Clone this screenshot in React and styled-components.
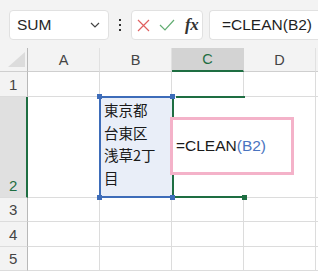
import styled, {createGlobalStyle} from 'styled-components'

const GlobalStyle = createGlobalStyle`
	html, body {
		margin: 0;
		padding: 0;
		background: #ffffff;
		overflow: hidden;
	}
	body {
		font-family: "Liberation Sans", "Noto Sans CJK JP", sans-serif;
	}
`

const Page = styled.div`
	width: 318px;
	height: 271px;
	overflow: hidden;
	display: flex;
	flex-direction: column;
`

const Toolbar = styled.div`
	height: 48px;
	flex: none;
	background: #f3f3f3;
	display: flex;
	align-items: flex-start;
	padding: 10px 0 0 9px;
	box-sizing: border-box;
`

const Box = styled.div`
	height: 30px;
	box-sizing: border-box;
	background: #ffffff;
	border: 1px solid #e1e1e1;
	border-radius: 4px;
	display: flex;
	align-items: center;
	flex: none;
`

const NameBox = styled(Box)`
	width: 100px;
	padding: 0 0 0 7px;
	justify-content: space-between;
	font-size: 15.5px;
	color: #262626;
`

const Chevron = styled.svg`
	width: 10px;
	height: 6px;
	margin-right: 8px;
`

const Dots = styled.div`
	width: 22px;
	height: 30px;
	display: flex;
	flex-direction: column;
	align-items: center;
	justify-content: center;
	gap: 3px;

	span {
		width: 2px;
		height: 2px;
		background: #333;
	}
`

const FxBox = styled(Box)`
	width: 72px;
	padding: 0 0 0 5px;
	gap: 9px;
`

const Fx = styled.span`
	font-family: "Liberation Serif", "DejaVu Serif", serif;
	font-style: italic;
	font-weight: bold;
	font-size: 17px;
	color: #333;
	letter-spacing: -0.5px;
	margin-left: 1px;
`

const FormulaInput = styled(Box)`
	flex: 1;
	margin-left: 6px;
	border-right: none;
	border-radius: 4px 0 0 4px;
	padding-left: 12px;
	font-size: 15.5px;
	color: #1f1f1f;
	white-space: nowrap;
`

const Sheet = styled.div`
	display: grid;
	grid-template-columns: 28px 72px 72px 72px 72px 30px;
	grid-template-rows: 24px 25px 101px 24px 25px 24px;
`

const Cell = styled.div`
	position: relative;
	box-sizing: border-box;
	border-right: 1px solid #dcdcdc;
	border-bottom: 1px solid #dcdcdc;
	background: #ffffff;
`

const ColHead = styled.div`
	box-sizing: border-box;
	display: flex;
	align-items: center;
	justify-content: center;
	font-size: 14.5px;
	background: ${p => p.$active ? '#d3d3d3' : '#f3f3f3'};
	color: ${p => p.$active ? '#1e6e42' : '#444'};
	border-right: 1px solid ${p => p.$active ? '#d3d3d3' : '#e1e1e1'};
	border-bottom: ${p => p.$active ? '2px solid #1e6e42' : '1px solid #cfcfcf'};
`

const Corner = styled.div`
	box-sizing: border-box;
	background: #f3f3f3;
	border-right: 1px solid #b8b8b8;
	border-bottom: 1px solid #cfcfcf;
	display: flex;
	align-items: flex-end;
	padding: 0 0 4px 8px;

	svg {
		width: 17px;
		height: 15px;
	}
`

const RowHead = styled.div`
	box-sizing: border-box;
	display: flex;
	align-items: flex-end;
	padding: 0 0 3px 9px;
	font-size: 15px;
	background: ${p => p.$active ? '#e0e0e0' : '#f3f3f3'};
	color: ${p => p.$active ? '#1e6e42' : '#444'};
	border-right: ${p => p.$active ? '2px solid #1e6e42' : '1px solid #b8b8b8'};
	border-bottom: 1px solid #dcdcdc;
`

const AddressCell = styled(Cell)`
	background: #e9eef8;
	border: none;
	margin-left: -1px;
	padding: 2px 0 0 5px;
	font-family: "Noto Sans CJK JP", sans-serif;
	font-size: 14.5px;
	line-height: 22.5px;
	color: #1a1a1a;

	&::after {
		content: "";
		position: absolute;
		left: 0;
		right: 0;
		top: -1px;
		bottom: 0;
		border: 2px solid #3d6cb9;
		border-right: none;
		pointer-events: none;
	}
`

const Handle = styled.span`
	position: absolute;
	width: 5px;
	height: 5px;
	background: ${p => p.$color};
	z-index: 3;
	${p => p.$top ? 'top: -3px;' : 'bottom: -2px;'}
	${p => p.$left ? 'left: -2px;' : 'right: -3px;'}
`

const ActiveCell = styled(Cell)`
	border: none;
	box-shadow: inset 0 -2px 0 #1e6e42;
	z-index: 2;

	&::before {
		content: "";
		position: absolute;
		left: 0;
		top: 1px;
		bottom: 0;
		width: 2px;
		background: #1e6e42;
	}
	&::after {
		content: "";
		position: absolute;
		left: 4px;
		right: -1px;
		top: -1px;
		height: 2px;
		background: #1e6e42;
	}
`

const Editor = styled.div`
	position: absolute;
	left: -2px;
	top: 20px;
	width: 124px;
	height: 58px;
	box-sizing: border-box;
	border: 3px solid #f4b2c9;
	background: #ffffff;
	display: flex;
	align-items: center;
	padding-left: 3px;
	font-size: 15.5px;
	color: #1a1a1a;
	white-space: nowrap;
	z-index: 4;
`

const Ref = styled.span`
	color: #4a74c0;
`

const rows = ['1', '2', '3', '4', '5']
const cols = ['A', 'B', 'C', 'D']

const App = () => {
	return (
		<Page>
			<GlobalStyle/>
			<Toolbar>
				<NameBox>
					SUM
					<Chevron viewBox="0 0 10 6">
						<path d="M1 1 L5 5 L9 1" fill="none" stroke="#444" strokeWidth="1.2"/>
					</Chevron>
				</NameBox>
				<Dots><span/><span/><span/></Dots>
				<FxBox>
					<svg width="13" height="13" viewBox="0 0 13 13">
						<path d="M1 1 L12 12 M12 1 L1 12" stroke="#e06060" strokeWidth="1.2" fill="none"/>
					</svg>
					<svg width="16" height="12" viewBox="0 0 16 12">
						<path d="M1 6 L6 11 L15 1" stroke="#62ad72" strokeWidth="1.2" fill="none"/>
					</svg>
					<Fx>fx</Fx>
				</FxBox>
				<FormulaInput>=CLEAN(B2)</FormulaInput>
			</Toolbar>
			<Sheet>
				<Corner>
					<svg viewBox="0 0 17 15">
						<path d="M17 0 L17 15 L0 15 Z" fill="#dcdcdc"/>
					</svg>
				</Corner>
				{cols.map(c => <ColHead key={c} $active={c === 'C'}>{c}</ColHead>)}
				<ColHead/>
				{rows.map(r => (
					<Row key={r} r={r}/>
				))}
			</Sheet>
		</Page>
	)
}

const Row = ({r}) => {
	if (r === '2') {
		return (
			<>
				<RowHead $active>{r}</RowHead>
				<Cell/>
				<AddressCell>
					<Handle $color="#3d6cb9" $top $left/>
					<Handle $color="#3d6cb9" $top/>
					<Handle $color="#3d6cb9" $left/>
					<Handle $color="#3d6cb9"/>
					東京都<br/>台東区<br/>浅草2丁<br/>目
				</AddressCell>
				<ActiveCell>
					<Editor>=CLEAN<Ref>(B2)</Ref></Editor>
					<Handle $color="#1e6e42"/>
				</ActiveCell>
				<Cell/>
				<Cell/>
			</>
		)
	}
	return (
		<>
			<RowHead>{r}</RowHead>
			<Cell/>
			<Cell/>
			<Cell/>
			<Cell/>
			<Cell/>
		</>
	)
}

export default App
